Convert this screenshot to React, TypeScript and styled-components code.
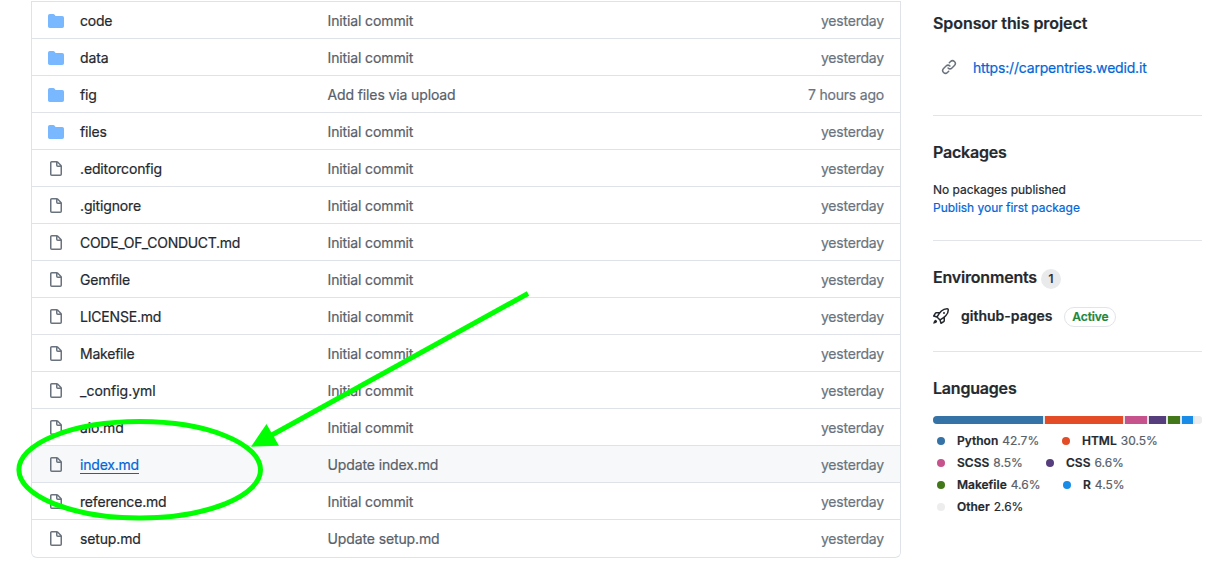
import React from "react";
import styled, { createGlobalStyle } from "styled-components";

const GlobalStyle = createGlobalStyle`
  *, *::before, *::after { box-sizing: border-box; }
  html, body { margin: 0; background: #fff; overflow: hidden; }
  body {
    font-family: Inter, "Liberation Sans", sans-serif;
    font-size: 14px;
    line-height: 20px;
    color: #24292f;
    -webkit-text-stroke: 0.2px currentColor;
  }
`;

const Page = styled.div`
  position: relative;
  display: flex;
  align-items: flex-start;
  gap: 32px;
  width: 1232px;
  height: 569px;
  padding: 0 30px 0 31px;
  overflow: hidden;
`;

const FileTable = styled.main`
  width: 870px;
  height: 557px;
  margin-top: 1px;
  border: 1px solid #dfe2e8;
  border-top: 0;
  border-radius: 0 0 6px 6px;
  overflow: hidden;
`;

const Row = styled.div<{ $active?: boolean }>`
  display: grid;
  grid-template-columns: 16px 231.5px 1fr 120px;
  column-gap: 16px;
  align-items: center;
  height: 37px;
  padding: 2px 16px 0;
  border-top: 1px solid #dfe2e8;
  background: ${(p) => (p.$active ? "#f6f8fa" : "#fff")};
`;

const RowIcon = styled.span<{ $folder?: boolean }>`
  display: flex;
  color: ${(p) => (p.$folder ? "#79b8ff" : "#6a737d")};
`;

const Name = styled.a<{ $active?: boolean; $tracking?: number }>`
  color: ${(p) => (p.$active ? "#0366d6" : "#24292f")};
  text-decoration: ${(p) => (p.$active ? "underline" : "none")};
  text-underline-offset: 3px;
  letter-spacing: ${(p) => p.$tracking ?? -0.14}px;
`;

const Message = styled.span`
  color: #586069;
  letter-spacing: -0.12px;
`;

const Age = styled.span`
  color: #6a737d;
  text-align: right;
  letter-spacing: -0.2px;
`;

const Sidebar = styled.aside`
  width: 269px;
`;

const Section = styled.section<{ $height: number; $top: number }>`
  height: ${(p) => p.$height}px;
  padding-top: ${(p) => p.$top}px;
  border-bottom: 1px solid #e1e4e8;
  &:last-child { border-bottom: 0; }
`;

const Heading = styled.h2<{ $tracking?: number }>`
  display: flex;
  align-items: center;
  margin: 0;
  font-size: 16px;
  line-height: 24px;
  font-weight: 600;
  letter-spacing: ${(p) => p.$tracking ?? -0.2}px;
`;

const Counter = styled.span`
  width: 20px;
  height: 20px;
  margin: 3px 0 0 4px;
  border-radius: 10px;
  background: #e8eaec;
  font-size: 12px;
  line-height: 20px;
  font-weight: 500;
  text-align: center;
`;

const SponsorLine = styled.div`
  display: flex;
  align-items: center;
  gap: 16px;
  margin-top: 23px;
  padding-left: 8px;
  color: #6a737d;

  svg { margin-top: -2px; }
`;

const Link = styled.a<{ $small?: boolean }>`
  color: #0366d6;
  font-size: ${(p) => (p.$small ? 12 : 14)}px;
  letter-spacing: ${(p) => (p.$small ? -0.03 : -0.18)}px;
`;

const PackageText = styled.div`
  margin-top: 17px;
  font-size: 12px;
  line-height: 18px;
  letter-spacing: -0.03px;
`;

const Environment = styled.div`
  display: flex;
  align-items: center;
  margin-top: 17px;
  height: 20px;
`;

const EnvName = styled.span`
  margin: 0 12px 0 12px;
  font-weight: 600;
`;

const State = styled.span`
  width: 52px;
  height: 20px;
  margin-top: 2px;
  border: 1px solid #e1e4e8;
  border-radius: 10px;
  color: #22863a;
  font-size: 12px;
  line-height: 18px;
  font-weight: 600;
  letter-spacing: -0.1px;
  text-align: center;
`;

const Bar = styled.div`
  display: flex;
  gap: 2px;
  height: 8px;
  margin-top: 16px;
  border-radius: 6px;
  background: #e1e4e8;
  overflow: hidden;
`;

const Segment = styled.span<{ $color: string; $width: number }>`
  width: ${(p) => p.$width}px;
  background: ${(p) => p.$color};
`;

const Legend = styled.ul`
  margin: 6px 0 0;
  padding: 0;
  list-style: none;
`;

const LegendRow = styled.li`
  display: flex;
  height: 22px;
`;

const Language = styled.span<{ $width: number }>`
  display: flex;
  align-items: center;
  width: ${(p) => p.$width}px;
  padding-left: 4px;
  font-size: 12px;
  white-space: nowrap;
`;

const Dot = styled.i<{ $color: string; $gap: number }>`
  width: 8px;
  height: 8px;
  margin-right: ${(p) => p.$gap}px;
  border-radius: 50%;
  background: ${(p) => p.$color};
`;

const LangName = styled.b`
  margin-right: 4px;
  font-weight: 600;
`;

const Percent = styled.span<{ $dark?: boolean }>`
  color: ${(p) => (p.$dark ? "#24292f" : "#586069")};
`;

const Annotation = styled.svg`
  position: absolute;
  inset: 0;
  pointer-events: none;
`;

const paths = {
  folder:
    "M1.75 1A1.75 1.75 0 000 2.75v10.5C0 14.216.784 15 1.75 15h12.5A1.75 1.75 0 0016 13.25v-8.5A1.75 1.75 0 0014.25 3h-6.5a.25.25 0 01-.2-.1l-.9-1.2c-.33-.44-.85-.7-1.4-.7h-3.5z",
  file:
    "M3.75 1.5a.25.25 0 00-.25.25v11.5c0 .138.112.25.25.25h8.5a.25.25 0 00.25-.25V6H9.75A1.75 1.75 0 018 4.25V1.5H3.75zm5.75.56v2.19c0 .138.112.25.25.25h2.19L9.5 2.06zM2 1.75C2 .784 2.784 0 3.75 0h5.086c.464 0 .909.184 1.237.513l3.414 3.414c.329.328.513.773.513 1.237v8.086A1.75 1.75 0 0112.25 15h-8.5A1.75 1.75 0 012 13.25V1.75z",
  link:
    "M7.775 3.275a.75.75 0 001.06 1.06l1.25-1.25a2 2 0 112.83 2.83l-2.5 2.5a2 2 0 01-2.83 0 .75.75 0 00-1.06 1.06 3.5 3.5 0 004.95 0l2.5-2.5a3.5 3.5 0 00-4.95-4.95l-1.25 1.25zm-4.69 9.64a2 2 0 010-2.83l2.5-2.5a2 2 0 012.83 0 .75.75 0 001.06-1.06 3.5 3.5 0 00-4.95 0l-2.5 2.5a3.5 3.5 0 004.95 4.95l1.25-1.25a.75.75 0 00-1.06-1.06l-1.25 1.25a2 2 0 01-2.83 0z",
  rocket:
    "M14.064 0a8.75 8.75 0 00-6.187 2.563l-.459.458c-.314.314-.616.641-.904.979H3.31a1.75 1.75 0 00-1.49.833L.11 7.607a.75.75 0 00.418 1.11l3.102.954c.037.051.079.1.124.145l2.429 2.428c.046.046.094.088.145.125l.954 3.102a.75.75 0 001.11.418l2.774-1.707a1.75 1.75 0 00.833-1.49V9.485c.338-.288.665-.59.979-.904l.458-.459A8.75 8.75 0 0016 1.936V1.75A1.75 1.75 0 0014.25 0h-.186zM10.5 10.625c-.088.06-.177.118-.266.175l-2.35 1.521.548 1.783 1.949-1.2a.25.25 0 00.119-.213v-2.066zM3.678 8.116L5.2 5.766c.058-.09.117-.178.176-.266H3.309a.25.25 0 00-.213.119l-1.2 1.95 1.782.547zm5.26-4.493A7.25 7.25 0 0114.063 1.5h.186a.25.25 0 01.25.25v.186a7.25 7.25 0 01-2.123 5.127l-.459.458a15.21 15.21 0 01-2.499 2.02l-2.317 1.5-2.143-2.143 1.5-2.317a15.25 15.25 0 012.02-2.5l.458-.458h.002zM12 5a1 1 0 11-2 0 1 1 0 012 0zm-8.44 9.56a1.5 1.5 0 10-2.12-2.12c-.734.73-1.047 2.332-1.15 3.003a.23.23 0 00.265.265c.671-.103 2.273-.416 3.005-1.148z",
};

const Icon = ({ name }: { name: keyof typeof paths }) => (
  <svg width="16" height="16" viewBox="0 0 16 16" fill="currentColor" strokeWidth="0">
    <path d={paths[name]} fillRule="evenodd" />
  </svg>
);

type Entry = {
  name: string;
  folder?: boolean;
  message?: string;
  age?: string;
  active?: boolean;
  tracking?: number;
};

const entries: Entry[] = [
  { name: "code", folder: true, tracking: -0.2 },
  { name: "data", folder: true },
  { name: "fig", folder: true, message: "Add files via upload", age: "7 hours ago" },
  { name: "files", folder: true },
  { name: ".editorconfig" },
  { name: ".gitignore" },
  { name: "CODE_OF_CONDUCT.md", tracking: -0.29 },
  { name: "Gemfile" },
  { name: "LICENSE.md", tracking: -0.19 },
  { name: "Makefile", tracking: -0.22 },
  { name: "_config.yml", tracking: 0 },
  { name: "aio.md" },
  { name: "index.md", message: "Update index.md", active: true, tracking: -0.2 },
  { name: "reference.md", tracking: -0.18 },
  { name: "setup.md", message: "Update setup.md" },
];

type Lang = { name: string; percent: string; color: string; bar: number; width: number; gap: number };

const languages: Lang[][] = [
  [
    { name: "Python", percent: "42.7%", color: "#3572a5", bar: 110, width: 125, gap: 12 },
    { name: "HTML", percent: "30.5%", color: "#e34c26", bar: 78, width: 120, gap: 12 },
  ],
  [
    { name: "SCSS", percent: "8.5%", color: "#c6538c", bar: 22, width: 109, gap: 12 },
    { name: "CSS", percent: "6.6%", color: "#563d7c", bar: 17, width: 120, gap: 12 },
  ],
  [
    { name: "Makefile", percent: "4.6%", color: "#427819", bar: 12, width: 126, gap: 12 },
    { name: "R", percent: "4.5%", color: "#198ce7", bar: 11, width: 120, gap: 12 },
  ],
  [{ name: "Other", percent: "2.6%", color: "#ededed", bar: 7, width: 120, gap: 12 }],
];

export default function App() {
  return (
    <>
      <GlobalStyle />
      <Page>
        <FileTable>
          {entries.map((e) => (
            <Row key={e.name} $active={e.active}>
              <RowIcon $folder={e.folder}>
                <Icon name={e.folder ? "folder" : "file"} />
              </RowIcon>
              <span>
                <Name $active={e.active} $tracking={e.tracking}>{e.name}</Name>
              </span>
              <Message>{e.message ?? "Initial commit"}</Message>
              <Age>{e.age ?? "yesterday"}</Age>
            </Row>
          ))}
        </FileTable>

        <Sidebar>
          <Section $height={116} $top={11}>
            <Heading $tracking={-0.07}>Sponsor this project</Heading>
            <SponsorLine>
              <Icon name="link" />
              <Link>https://carpentries.wedid.it</Link>
            </SponsorLine>
          </Section>
          <Section $height={125} $top={24}>
            <Heading>Packages</Heading>
            <PackageText>
              <div>No packages published</div>
              <Link $small>Publish your first package</Link>
            </PackageText>
          </Section>
          <Section $height={111} $top={24}>
            <Heading>
              Environments <Counter>1</Counter>
            </Heading>
            <Environment>
              <Icon name="rocket" />
              <EnvName>github-pages</EnvName>
              <State>Active</State>
            </Environment>
          </Section>
          <Section $height={200} $top={24}>
            <Heading>Languages</Heading>
            <Bar>
              {languages.flat().map((l) => (
                <Segment key={l.name} $color={l.color} $width={l.bar} />
              ))}
            </Bar>
            <Legend>
              {languages.map((row) => (
                <LegendRow key={row[0].name}>
                  {row.map((l) => (
                    <Language key={l.name} $width={l.width}>
                      <Dot $color={l.color} $gap={l.gap} />
                      <LangName>{l.name}</LangName>
                      <Percent $dark={l.name === "Other"}>{l.percent}</Percent>
                    </Language>
                  ))}
                </LegendRow>
              ))}
            </Legend>
          </Section>
        </Sidebar>

        <Annotation width="1232" height="569" viewBox="0 0 1232 569">
          <ellipse cx="139.7" cy="469.8" rx="120.8" ry="48.2" fill="none" stroke="#00ff00" strokeWidth="5" />
          <line x1="528" y1="293.5" x2="270" y2="436" stroke="#00ff00" strokeWidth="5" />
          <polygon points="251,446.7 266.5,424 279,445.7" fill="#00ff00" />
        </Annotation>
      </Page>
    </>
  );
}
